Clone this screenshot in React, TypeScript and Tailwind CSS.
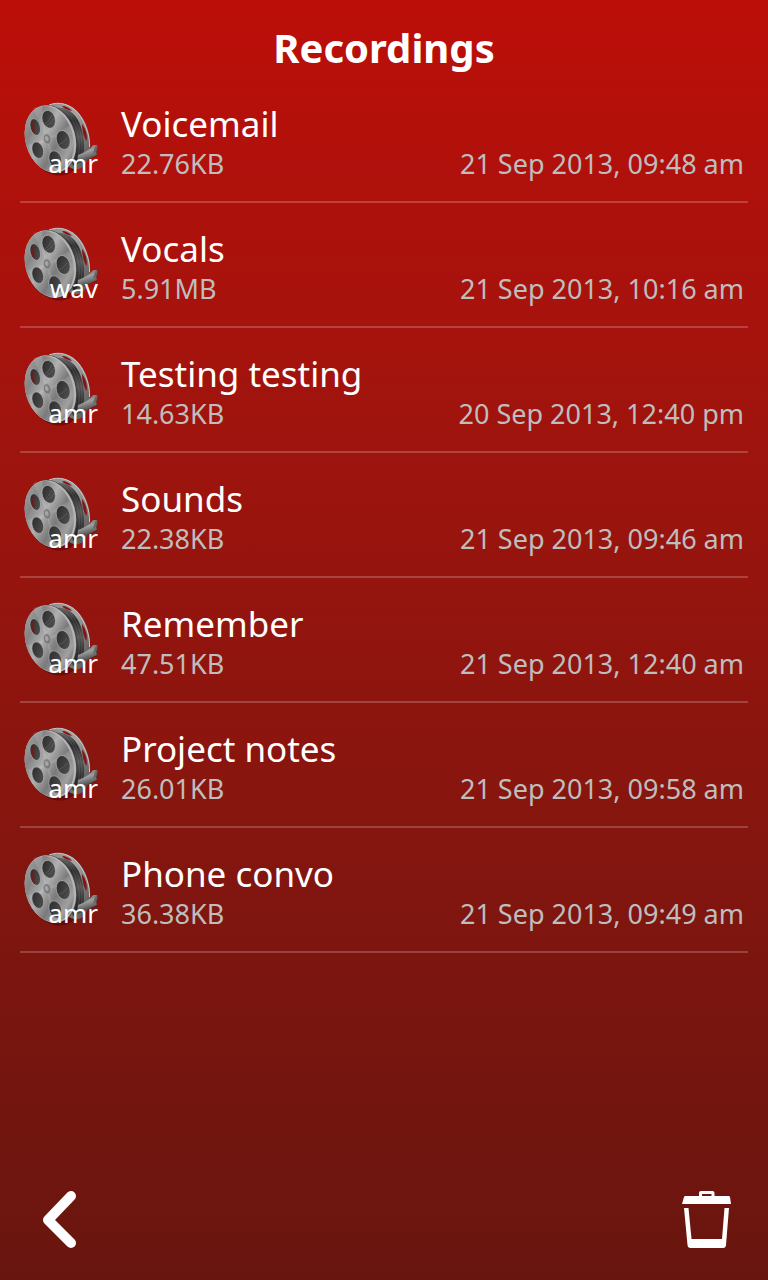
import React from "react";

type Recording = { name: string; size: string; date: string; type: string };

const recordings: Recording[] = [
  { name: "Voicemail", size: "22.76KB", date: "21 Sep 2013, 09:48 am", type: "amr" },
  { name: "Vocals", size: "5.91MB", date: "21 Sep 2013, 10:16 am", type: "wav" },
  { name: "Testing testing", size: "14.63KB", date: "20 Sep 2013, 12:40 pm", type: "amr" },
  { name: "Sounds", size: "22.38KB", date: "21 Sep 2013, 09:46 am", type: "amr" },
  { name: "Remember", size: "47.51KB", date: "21 Sep 2013, 12:40 am", type: "amr" },
  { name: "Project notes", size: "26.01KB", date: "21 Sep 2013, 09:58 am", type: "amr" },
  { name: "Phone convo", size: "36.38KB", date: "21 Sep 2013, 09:49 am", type: "amr" },
];

function ReelDefs() {
  return (
    <svg className="absolute size-0" aria-hidden="true">
      <defs>
        <linearGradient id="face" x1="0.1" y1="0" x2="0.8" y2="1">
          <stop offset="0" stopColor="#a8a8a8" />
          <stop offset="0.25" stopColor="#848484" />
          <stop offset="0.45" stopColor="#b0b0b0" />
          <stop offset="0.65" stopColor="#7a7a7a" />
          <stop offset="0.85" stopColor="#a0a0a0" />
          <stop offset="1" stopColor="#626262" />
        </linearGradient>
        <linearGradient id="back" x1="0" y1="0" x2="1" y2="0.8">
          <stop offset="0" stopColor="#8a8a8a" />
          <stop offset="0.5" stopColor="#a5a5a5" />
          <stop offset="1" stopColor="#585858" />
        </linearGradient>
        <linearGradient id="film" x1="0" y1="0" x2="0" y2="1">
          <stop offset="0" stopColor="#6a6a6a" />
          <stop offset="0.22" stopColor="#2c2c2c" />
          <stop offset="0.5" stopColor="#555555" />
          <stop offset="0.75" stopColor="#303030" />
          <stop offset="1" stopColor="#1f1f1f" />
        </linearGradient>
        <linearGradient id="hole" x1="0" y1="0" x2="1" y2="1">
          <stop offset="0" stopColor="#292929" />
          <stop offset="1" stopColor="#545454" />
        </linearGradient>
        <linearGradient id="tail" x1="0" y1="0" x2="0.3" y2="1">
          <stop offset="0" stopColor="#555555" />
          <stop offset="0.45" stopColor="#a0a0a0" />
          <stop offset="1" stopColor="#303030" />
        </linearGradient>
      </defs>
    </svg>
  );
}

function FilmReel() {
  return (
    <svg viewBox="0 0 80 80" className="block size-20" aria-hidden="true">
      <path d="M5 28C3 47 14 71 34 76C43 78 52 75 56 68L60 64L77 57L77 50L60 54Z" fill="#300000" opacity="0.4" />
      {/* rear flange */}
      <path d="M26 8C34 2 48 3 57 12C66 21 71 36 70 49C69 60 65 68 59 70C51 72 44 65 40 55Z" fill="url(#back)" />
      <path d="M29 6C39 2 50 5 58 14C65 23 70 36 69.500 48" fill="none" stroke="#c8c8c8" strokeWidth="1" />
      <path d="M62 25C66 30 67.500 37 66.500 42C64 39 62 31 62 25Z" fill="#861310" />
      <path d="M42 7C46 7 50 9 52 12C48 11 44 10 42 7Z" fill="#861310" />
      {/* wound film */}
      <path d="M37 9C46 8 54 13 59 23C64 34 66 49 62 61L53 67L43 20Z" fill="url(#film)" />
      <path d="M46 13C56 22 62 40 58 59M50 14C60 25 64 41 61 58" fill="none" stroke="#858585" strokeWidth="0.5" opacity="0.6" />
      {/* loose end */}
      <path d="M58 56C64 54 69 51 73 46L77 46C76 50 76 53 77 56L63 63L57 65Z" fill="url(#tail)" />
      <ellipse cx="75.5" cy="50.500" rx="1.3" ry="4.5" transform="rotate(20 75.500 50.500)" fill="#676767" />
      {/* front flange */}
      <ellipse cx="31" cy="40" rx="25.4" ry="34.6" transform="rotate(-16 31 40)" fill="#404040" />
      <ellipse cx="30.4" cy="40" rx="25" ry="34.4" transform="rotate(-16 30.4 40)" fill="#b5b5b5" />
      <ellipse cx="29.3" cy="40" rx="23.8" ry="33.6" transform="rotate(-16 29.3 40)" fill="url(#face)" />
      <path d="M27 40L13 9L22 7ZM27 40L49 27L52 35ZM27 40L8 46L11 53ZM27 40L32 72L40 72Z" fill="#ffffff" opacity="0.12" />
      <g fill="url(#hole)" stroke="#b8b8b8" strokeWidth="0.6">
        <ellipse cx="15.2" cy="28" rx="5" ry="8.6" transform="rotate(-15 15.2 28)" />
        <ellipse cx="28.7" cy="20.3" rx="6.5" ry="9.2" transform="rotate(-17 28.7 20.3)" />
        <ellipse cx="43.2" cy="41" rx="6.8" ry="9.7" transform="rotate(-15 43.2 41)" />
        <ellipse cx="17.8" cy="51.2" rx="5.6" ry="8.5" transform="rotate(-18 17.8 51.2)" />
        <ellipse cx="35.3" cy="60.5" rx="6.2" ry="8.9" transform="rotate(-18 35.3 60.5)" />
      </g>
      <path d="M12.500 22C13.500 26 15 30 14.500 35C10.500 31 10.500 26 12.500 22Z" fill="#7d1713" opacity="0.8" />
      <path d="M25 25Q29 23 32 16M26 27Q31 25 34 19M38 46Q43 45 47 39" fill="none" stroke="#a0a0a0" strokeWidth="0.5" opacity="0.5" />
      <ellipse cx="27.2" cy="40" rx="3.8" ry="5.2" transform="rotate(-15 27.2 40)" fill="#7c7c7c" stroke="#a8a8a8" strokeWidth="0.7" />
      <ellipse cx="26.7" cy="39.5" rx="1.8" ry="2.6" transform="rotate(-15 26.7 39.5)" fill="#a4a4a4" />
    </svg>
  );
}

function RecordingRow({ item }: { item: Recording }) {
  return (
    <li className="flex h-[125px] items-start gap-[21px] border-b-2 border-white/20 pt-[21px]">
      <div className="relative shrink-0">
        <FilmReel />
        <span className="absolute right-[2px] bottom-0 text-[26px] leading-8 text-white">{item.type}</span>
      </div>
      <div className="min-w-0 flex-1 pt-[2px] pr-1">
        <h2 className="text-[35px] leading-[46px] text-white">{item.name}</h2>
        <div className="flex justify-between text-[27px] leading-[34px] text-[#bebebe]">
          <span>{item.size}</span>
          <time>{item.date}</time>
        </div>
      </div>
    </li>
  );
}

export default function App() {
  return (
    <div className="flex min-h-screen flex-col bg-linear-to-b from-[#bc0e09] to-[#69150f] font-['Noto_Sans',sans-serif]">
      <ReelDefs />
      <header className="flex h-[78px] items-end justify-center pb-[5px]">
        <h1 className="text-[40px] leading-[50px] font-bold text-white">Recordings</h1>
      </header>
      <main className="flex-1 px-5">
        <ul>
          {recordings.map((item) => (
            <RecordingRow key={item.name} item={item} />
          ))}
        </ul>
      </main>
      <footer className="flex h-[120px] items-center justify-between pr-[23px] pl-[30px]">
        <button type="button" aria-label="Back" className="block">
          <svg viewBox="0 0 60 80" className="h-20 w-[60px]" fill="none" aria-hidden="true">
            <path d="M41 16L18 40L41 63" stroke="white" strokeWidth="10" strokeLinecap="round" strokeLinejoin="round" />
          </svg>
        </button>
        <button type="button" aria-label="Delete" className="block">
          <svg viewBox="0 0 75 80" className="h-20 w-[75px]" fill="white" aria-hidden="true">
            <path fillRule="evenodd" d="M12 24L14 17Q14.400 16 15.500 16H29V13Q29 11 31 11H42.500Q44.500 11 44.500 13V16H58.500Q59.700 16 60 17L61 24ZM32 14V16H41.500V14Z" />
            <path d="M14 28H18.500L21.500 59H52L54.500 28H59L56 65Q55.800 68 53 68H20.500Q17.800 68 17.500 65Z" />
          </svg>
        </button>
      </footer>
    </div>
  );
}
